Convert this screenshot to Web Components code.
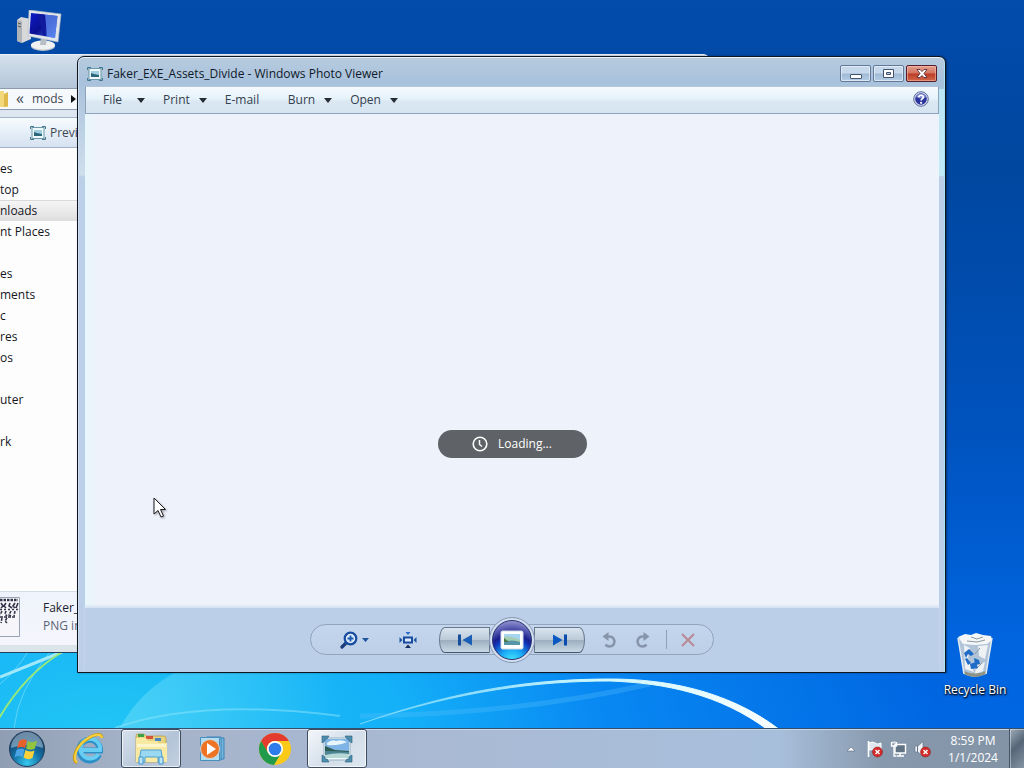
<!DOCTYPE html>
<html lang="en">
<head>
<meta charset="utf-8">
<title>Desktop</title>
<style>
  html, body {
    height: 100%;
    margin: 0;
    overflow: hidden;
  }

  body {
    font-family: 'Open Sans', 'Noto Sans', sans-serif;
    font-size: 12px;
    line-height: 16px;
    color: #1c2430;
    --frame: #bbcfe9;
    --ink: #10161f;
  }
</style>
</head>
<body>
<desk-top>
  <wall-paper slot="wallpaper"></wall-paper>
  <explorer-window></explorer-window>
  <photo-viewer heading="Faker_EXE_Assets_Divide - Windows Photo Viewer"></photo-viewer>
  <desk-icon class="computer" icon="computer" label="Computer" hide-label></desk-icon>
  <desk-icon class="bin" icon="bin" label="Recycle Bin"></desk-icon>
  <mouse-pointer></mouse-pointer>
  <task-bar slot="taskbar"></task-bar>
</desk-top>

<script>
const ICONS = {
  computer: `<svg width="46" height="42" viewBox="0 0 46 42">
    <path d="M1 10 5 7l10 2v20L6 33l-5-2z" fill="#d6d8da"/><path d="M1 10l5 1v22l-5-2z" fill="#aeb3b8"/>
    <path d="M2 13l3 1M2 16l3 1" stroke="#555" stroke-width="1"/>
    <ellipse cx="27" cy="36" rx="12" ry="5" fill="#bfc6cb"/><ellipse cx="27" cy="35" rx="12" ry="4.500" fill="#f0f2f2"/>
    <path d="M25 27h6l-1 8h-6z" fill="#b7bec4"/>
    <path d="M13 0l32 4-3 28-30-6z" fill="#dfe5ea" stroke="#b3bcc5" stroke-width=".6"/>
    <path d="M15 3l26.500 3-2.500 22L13.500 23.500z" fill="url(#scr)"/>
    <path d="M29 4.600l12.500 1.400-2.500 22-8-1.500z" fill="#5f8cf2" opacity=".75"/>
    <path d="M22 3.800l6 .7 2 21.500-3-.5z" fill="#111a9c"/>
    <defs><linearGradient id="scr" x1="0" y1="0" x2="1" y2="1"><stop offset="0" stop-color="#0d19c8"/><stop offset=".5" stop-color="#0a1092"/><stop offset="1" stop-color="#4a76ec"/></linearGradient></defs></svg>`,
  bin: `<svg width="38" height="46" viewBox="0 0 38 46">
    <path d="M2 5l6 36q10 6 22 0l6-36z" fill="#c3cdd6" opacity=".9"/>
    <path d="M2 4l7-3 6 1 5-2 7 2 8 1 1 4-5 4-12 1-12-1z" fill="#f4f6f7"/>
    <path d="M8 12l6 3-2 10 6 14-9-3zM22 13l10-1-3 14-6-3zM20 33l9-4-2 9-8 3z" fill="#eef2f4"/>
    <path d="M15 4l6 2 6-2M11 8l10 1 8-2M24 15l-5 6M26 30l-6 6" stroke="#8b98a3" fill="none"/>
    <path d="M8 20l5-4 5 5-3 2-3-2-2 4zM9 26l2-1 4 5-3 2zM18 25l5 2 1 4-5 1zM14 31l6-2 2 6-7 1z" fill="#1e6cc7"/>
    <path d="M8 38q11 5 22 0v3q-11 6-22 0z" fill="#8d9284"/>
    <path d="M2 5l6 36M36 5l-6 36" stroke="#e6edf2" stroke-width="1.500"/></svg>`,
  photo: `<svg width="16" height="16" viewBox="0 0 16 16">
    <rect x="2" y="2.500" width="12" height="11" fill="#eef8fb" stroke="#6b98a8"/>
    <path d="M4 5h8v6H4z" fill="#9fd0e2"/><path d="M4 7l3 1 5 1v2H4z" fill="#2c6679"/>
    <path d="M.5 4V1.500H4M12 1.500h3.500V4M15.500 12v2.500H12M4 14.500H.5V12" fill="none" stroke="#46798c"/></svg>`,
  help: `<svg width="16" height="16" viewBox="0 0 16 16">
    <circle cx="8" cy="8" r="7.300" fill="#d2d9ec" stroke="#5f6f9c"/><circle cx="8" cy="8" r="5.800" fill="#2a349c"/>
    <path d="M3 6a5.500 5.500 0 0 1 10 0q-3 3-10 0z" fill="#7c8bd0"/>
    <path d="M5.800 6.300C5.800 3.500 10.400 3.600 10.300 6.200 10.200 7.800 8.100 8 8.100 9.600" fill="none" stroke="#fff" stroke-width="1.700"/><circle cx="8.100" cy="11.800" r="1.100" fill="#fff"/></svg>`,
  minimize: `<svg width="12" height="11" viewBox="0 0 12 11"><rect x=".5" y="6.500" width="11" height="4" rx=".5" fill="#fff" stroke="#45526b"/></svg>`,
  maximize: `<svg width="12" height="11" viewBox="0 0 12 11"><path d="M.5 1.500h10v8H.5zM3.500 4.500v2h4v-2z" fill="#fff" stroke="#45526b" fill-rule="evenodd"/></svg>`,
  close: `<svg width="12" height="11" viewBox="0 0 12 11"><path d="M1 1.500h3l2 2 2-2h3L8 5.500l3 4H8l-2-2-2 2H1l3-4z" fill="#fff" stroke="#5b3038" stroke-width=".9"/></svg>`,
  clock: `<svg width="16" height="16" viewBox="0 0 16 16"><circle cx="8" cy="8" r="6.800" fill="none" stroke="#fff" stroke-width="1.600"/><path d="M7.500 4v4.500L10 10.500" fill="none" stroke="#fff" stroke-width="1.500"/></svg>`,
  zoom: `<svg width="30" height="18" viewBox="0 0 30 18">
    <path d="M7 11l-5 5" stroke="#1a3c7c" stroke-width="3.200" stroke-linecap="round"/>
    <circle cx="10.500" cy="7.500" r="5.800" fill="#dceafa" stroke="#174b9d" stroke-width="2.200"/>
    <path d="M7.500 7.500h6M10.500 4.500v6" stroke="#1c59ae" stroke-width="1.800"/><path d="M22 7h7l-3.500 4z" fill="#1d549f"/></svg>`,
  fit: `<svg width="18" height="18" viewBox="0 0 18 18">
    <rect x="5" y="6.500" width="8" height="5" fill="#dceafa" stroke="#174b9d" stroke-width="2"/>
    <path d="M6.500 1h5L9 4z" fill="#2b6ccb"/><path d="M6 17h6L9 13.500z" fill="#142c58"/><path d="M.5 6v6L3.500 9zM17.500 6v6L14.500 9z" fill="#1d549f"/></svg>`,
  previous: `<svg width="16" height="12" viewBox="0 0 16 12"><path d="M1 .5h3v11H1z" fill="#174f9f"/><path d="M15 .5v11L5.500 6z" fill="#1c5fb7"/></svg>`,
  next: `<svg width="16" height="12" viewBox="0 0 16 12"><path d="M12 .5h3v11h-3z" fill="#0a4cb0"/><path d="M1 .5v11L10.500 6z" fill="#0a57c2"/></svg>`,
  slideshow: `<svg width="24" height="20" viewBox="0 0 24 20"><rect x="1" y="1" width="22" height="18" rx="1.500" fill="#fff" stroke="#d5dde8"/>
    <path d="M4 4h16v11H4z" fill="#a6d5ef"/><path d="M4 7q6-2 16 3v5H4z" fill="#a5cdb2"/><path d="M4 12q8-3 16 0v3H4z" fill="#5795a8"/><path d="M4 8l5 4H4z" fill="#4b7a4a"/></svg>`,
  rotateLeft: `<svg width="16" height="18" viewBox="0 0 16 18"><path d="M5 5.500h3.500a5 5 0 1 1-4 8" fill="none" stroke="#8795ab" stroke-width="2.600"/><path d="M7.500 1v9L1.500 5.500z" fill="#8795ab"/></svg>`,
  rotateRight: `<svg width="16" height="18" viewBox="0 0 16 18"><path d="M11 5.500H7.500a5 5 0 1 0 4 8" fill="none" stroke="#8795ab" stroke-width="2.600"/><path d="M8.500 1v9l6-4.500z" fill="#8795ab"/></svg>`,
  remove: `<svg width="16" height="16" viewBox="0 0 16 16"><path d="M2 2l12 12M14 2L2 14" stroke="#b98996" stroke-width="2"/></svg>`,
  folderTab: `<svg width="9" height="18" viewBox="0 0 9 18"><path d="M0 1h4v3l4 1v12H0z" fill="#f3d77b"/><path d="M4 4l4-2v14l-4 1z" fill="#e0b94c"/></svg>`,
  thumb: `<svg width="22" height="42" viewBox="0 0 22 42"><path d="M0 .5h19.500v39H0" fill="#f6f6fa" stroke="#9aa3b5"/>
    <g fill="none" stroke="#35354c" stroke-width="1.600"><path d="M0 3h18" stroke-width="2.500" stroke-dasharray="2.500 1"/><path d="M1 6l2 3-2 2M6 6l-2 3 2 2M10 6l-1 3 3 2M15 6l-2 3 2 2M18 6l-2 5"/><path d="M0 12.500h18" stroke-dasharray="2 2"/><path d="M2 14l-2 4M6 14l-1 3 2 2M11 14l-2 4 2 1M15 14l-1 5M2 21l-1 5M7 21l-2 3 2 2M0 20h16" stroke-dasharray="3 1"/></g></svg>`,
  start: `<svg width="38" height="38" viewBox="0 0 38 38"><defs><radialGradient id="orb" cx=".5" cy=".9" r=".8"><stop offset="0" stop-color="#35c9ee"/><stop offset=".5" stop-color="#1470a5"/><stop offset="1" stop-color="#173e66"/></radialGradient></defs>
    <circle cx="19" cy="19" r="17.500" fill="url(#orb)" stroke="#243c58"/><path d="M3 18a16 16 0 0 1 32 0q-16-6-32 0z" fill="#b3ccdd" opacity=".55"/>
    <path d="M11 11q4-3 8-.5l-2 7.500q-4-2-8 .5z" fill="#e8602c"/><path d="M20 11q4 2.500 9-.5l-2 8q-4 2.500-9 0z" fill="#93c43e"/>
    <path d="M8.500 20q4-2.500 8-.5l-2 7.500q-4-2-8 .5z" fill="#4aa4e4"/><path d="M17.500 20q4 2.500 9 .5l-2 7.500q-4 2.500-9-.5z" fill="#fbd03a"/></svg>`,
  ie: `<svg width="34" height="34" viewBox="0 0 34 34">
    <path d="M27 22.500A10.300 10.300 0 1 1 28 18.500H9" fill="none" stroke="#2d8fc8" stroke-width="6"/>
    <path d="M26.500 22A9.800 9.800 0 1 1 28 18H10" fill="none" stroke="#68cdf2" stroke-width="4"/>
    <path d="M5 31C-1 27 4 14 14 8 22 2 30 0 30 6" fill="none" stroke="#c39a1a" stroke-width="3"/>
    <path d="M5 30.500C0 26 5 14 14 7.500 22 2 29 1 30 6" fill="none" stroke="#fbd23c" stroke-width="2"/></svg>`,
  explorer: `<svg width="34" height="34" viewBox="0 0 34 34">
    <path d="M2 4q0-2 2-2h6l2 2h18q2 0 2 2v24H2z" fill="#e7d27e" stroke="#b89d4c" stroke-width=".8"/>
    <path d="M4 2h6v3H4z" fill="#3fa04c"/><path d="M12 4h7v3h-7z" fill="#d7513c"/><path d="M21 6h6v3h-6z" fill="#4a84c8"/>
    <path d="M2 6h10l2 3h9l1 2h9v19H2z" fill="#f8eaa2"/><path d="M3 12h29v3H3z" fill="#fdf6cc"/>
    <path d="M7 18h20l2 12h-5v-5H11v5H5z" fill="#9bd9f2" stroke="#4f9fd0"/><path d="M5 25h4v7H5zM25 25h4v7h-4z" fill="#b9e5f8" stroke="#4496cc"/></svg>`,
  media: `<svg width="28" height="28" viewBox="0 0 28 28"><path d="M12 3h13v21H12z" fill="#75b5dc" stroke="#3d83b8"/><path d="M8 2h14v23H8z" fill="#8bc6e8" stroke="#3d83b8"/>
    <path d="M1.500 2.500h19v23h-19z" fill="#b3def2" stroke="#498fbe"/><circle cx="11" cy="14" r="9.500" fill="#ee7425" stroke="#d1d5d8"/><path d="M8 8v12l9-6z" fill="#fff"/></svg>`,
  chrome: `<svg width="34" height="34" viewBox="0 0 34 34"><circle cx="17" cy="17" r="16" fill="#fbc918"/>
    <path d="M3.100 9A16 16 0 0 1 30.900 9H17a8 8 0 0 0-7 12z" fill="#e33b2e"/><path d="M3.100 9A16 16 0 0 0 16 33l7.500-12.500a8 8 0 0 1-13.500 0z" fill="#219a4c"/>
    <circle cx="17" cy="17" r="8" fill="#fff"/><circle cx="17" cy="17" r="6.300" fill="#2c7ceb"/></svg>`,
  viewer: `<svg width="32" height="28" viewBox="0 0 32 28"><path d="M3 3h26v22H3z" fill="#f2fafd" stroke="#93b2c2"/><path d="M4 4h24v19H4z" fill="#7fb4e6"/>
    <path d="M6 8q5-4 9-2 5-2 11 1-9 4-20 3z" fill="#e8f5fb"/><path d="M4 11l10 4 14 1v3H4z" fill="#2e5c52"/><path d="M4 16q12 0 24 1v4H4z" fill="#4c8594"/><path d="M4 20q12-3 24-1v4H4z" fill="#b7d9d6"/>
    <path d="M1 8V1h7l-2 3H4v2zM31 8V1h-7l2 3h2v2zM1 20v7h7l-2-3H4v-2zM31 20v7h-7l2-3h2v-2z" fill="#4d8fb0" stroke="#2c607c" stroke-width=".6"/></svg>`,
  chevron: `<svg width="10" height="6" viewBox="0 0 10 6"><path d="M1 5l4-4 4 4z" fill="#fff" stroke="#5c6c80" stroke-width=".6"/></svg>`,
  flag: `<svg width="18" height="18" viewBox="0 0 18 18"><path d="M2.500 1v16" stroke="#fff" stroke-width="1.600"/><path d="M3 3q4-2 6 0t6 0v7q-4 1-6 0t-6 0z" fill="#dfe6ee" stroke="#fff"/>
    <circle cx="11.500" cy="12" r="5" fill="#d32a27" stroke="#8d1f22" stroke-width=".5"/><path d="M9.500 10l4 4M13.500 10l-4 4" stroke="#fff" stroke-width="1.500"/></svg>`,
  network: `<svg width="18" height="18" viewBox="0 0 18 18"><path d="M5 4.500h10.500v8.500H5z" fill="#5f7385" stroke="#fff" stroke-width="1.400"/><path d="M10 13v3M6.500 16h7.500" stroke="#fff" stroke-width="1.500"/>
    <path d="M1.500 2v4h5V2M4 6v10h2M3 1.500v2M5 1.500v2" fill="none" stroke="#fff" stroke-width="1.300"/></svg>`,
  volume: `<svg width="18" height="18" viewBox="0 0 18 18"><path d="M1 6h3l5-4.500v15L4 12H1z" fill="#eef2f6" stroke="#5c6c80" stroke-width=".6"/><path d="M3.500 6v6" stroke="#66768a"/>
    <circle cx="11.500" cy="12" r="5" fill="#d32a27" stroke="#8d1f22" stroke-width=".5"/><path d="M9.500 10l4 4M13.500 10l-4 4" stroke="#fff" stroke-width="1.500"/></svg>`,
  pointer: `<svg width="14" height="22" viewBox="0 0 14 22"><path d="M1 1v16l4-3.500 3 6.500 2.500-1-3-6.500h5z" fill="#fff" stroke="#1b1b22"/></svg>`
};

// Shared base: every element renders one template string into an open root.
class ShellElement extends HTMLElement {
  constructor() {
    super();
    this.attachShadow({ mode: 'open' });
  }

  connectedCallback() {
    this.shadowRoot.innerHTML = this.render();
  }
}

class UiIcon extends ShellElement {
  render() {
    return `
      <style>
        :host { display: inline-flex; flex: none; }
        svg { display: block; }
      </style>
      ${ICONS[this.getAttribute('name')] || ''}
    `;
  }
}

class DeskTop extends ShellElement {
  render() {
    return `
      <style>
        :host {
          display: grid;
          grid-template-rows: 1fr 40px;
          height: 100vh;
          overflow: hidden;
          position: relative;
        }

        main { position: relative; min-height: 0; }

        ::slotted(explorer-window) { position: absolute; inset: 54px 314px 75px 0; }
        ::slotted(photo-viewer) { position: absolute; inset: 56px 78px 55px 77px; }
        ::slotted(.computer) { position: absolute; left: 16px; top: 10px; }
        ::slotted(.bin) { position: absolute; right: 9px; bottom: 30px; width: 80px; }
        ::slotted(mouse-pointer) { position: absolute; left: 153px; top: 497px; }
      </style>
      <slot name="wallpaper"></slot>
      <main><slot></slot></main>
      <slot name="taskbar"></slot>
    `;
  }
}

class WallPaper extends ShellElement {
  render() {
    return `
      <style>
        :host {
          position: absolute;
          inset: 0;
          background:
            radial-gradient(ellipse 840px 440px at 10% 96%, #22c6f4 0%, #14b0f8 36%, rgba(10, 144, 247, 0.8) 60%, rgba(0, 110, 235, 0) 100%),
            linear-gradient(180deg, #034bac 0%, #00479f 22%, #0052bd 55%, #0064de 82%, #0067e4 100%);
        }

        svg { width: 100%; height: 100%; display: block; }
      </style>
      <svg viewBox="0 0 1024 768" preserveAspectRatio="none" fill="none">
        <defs>
          <linearGradient id="arc" gradientUnits="userSpaceOnUse" x1="360" x2="800" y1="0" y2="0">
            <stop offset="0" stop-color="#9fe8fc" stop-opacity=".4"/><stop offset=".5" stop-color="#c9f6fd"/><stop offset="1" stop-color="#fff"/>
          </linearGradient>
          <linearGradient id="glow" x1="0" y1="0" x2="1" y2="0">
            <stop offset="0" stop-color="#7be2fa" stop-opacity=".45"/><stop offset="1" stop-color="#7be2fa" stop-opacity="0"/>
          </linearGradient>
        </defs>
        <path d="M120 728Q140 690 180 670H340V728z" fill="url(#glow)"/>
        <path d="M115 728Q200 698 340 716" stroke="#8ce5fb" stroke-width="2" opacity=".5"/>
        <path d="M360 716Q520 714 650 684" stroke="#59bffb" stroke-width="5" opacity=".3"/>
        <path d="M0 677Q30 665 62 652" stroke="#c3f4fd" stroke-width="3" opacity=".8"/>
        <path d="M0 684Q15 672 28 652M14 728Q18 690 50 652" stroke="#9aeafa" opacity=".5"/>
        <path d="M-2 720Q24 675 62 652" stroke="#9ae878" stroke-width="2"/>
        <path d="M360 724C460 688 540 679 610 679 660 679 725 688 780 730L768 730C720 694 665 683 610 681 540 681 460 690 360 724z" fill="url(#arc)" stroke="url(#arc)"/>
      </svg>
    `;
  }
}

class DeskIcon extends ShellElement {
  render() {
    const label = this.getAttribute('label');
    return `
      <style>
        :host { display: block; }

        button {
          display: flex;
          flex-direction: column;
          align-items: center;
          gap: 3px;
          width: 100%;
          padding: 0;
          border: 0;
          background: none;
          font: inherit;
          color: #fff;
          text-shadow: 0 1px 2px #000, 1px 1px 2px #000;
          white-space: nowrap;
        }
      </style>
      <button type="button" aria-label="${label}">
        <ui-icon name="${this.getAttribute('icon')}"></ui-icon>
        ${this.hasAttribute('hide-label') ? '' : `<span>${label}</span>`}
      </button>
    `;
  }
}

class NavItem extends ShellElement {
  render() {
    return `
      <style>
        :host { display: block; height: 21px; }

        a {
          display: block;
          line-height: 21px;
          color: #15161c;
          text-decoration: none;
          white-space: nowrap;
        }

        :host([selected]) {
          background: linear-gradient(#f7f7f7, #dedede);
          box-shadow: inset 0 1px #d9d9d9;
        }
      </style>
      <a href="#"><slot></slot></a>
    `;
  }
}

class ExplorerWindow extends ShellElement {
  render() {
    return `
      <style>
        :host {
          display: flex;
          flex-direction: column;
          box-sizing: border-box;
          border: 1px solid #24405c;
          border-top-color: #e8f1f8;
          border-left: 0;
          border-radius: 0 7px 0 0;
          background: #dde6f1;
          overflow: hidden;
        }

        .caption { height: 33px; background: linear-gradient(#d5e1ec, #b3c5d9); }

        .address {
          display: flex;
          align-items: center;
          gap: 7px;
          height: 20px;
          border: 1px solid #8c9bb0;
          border-left: 0;
          background: #f6f9fc;
        }

        .address button, .tools button {
          display: flex;
          align-items: center;
          gap: 4px;
          padding: 0;
          border: 0;
          background: none;
          font: inherit;
          color: #3f4652;
        }

        .address .crumb { gap: 8px; }
        .address b { font-size: 16px; font-weight: normal; line-height: 16px; padding-bottom: 2px; }

        .arrow {
          border: 4px solid transparent;
          border-left: 5px solid #111;
          border-right: 0;
        }

        .tools {
          display: flex;
          align-items: center;
          height: 29px;
          margin-top: 7px;
          padding-left: 30px;
          border: 1px solid #a4b3c8;
          border-left: 0;
          background: linear-gradient(#f7fbfe, #e6eff8 50%, #d6e1f0);
        }

        nav { flex: 1; min-height: 0; padding-top: 10px; background: #fdfdfe; }

        footer {
          display: flex;
          align-items: flex-start;
          gap: 21px;
          height: 48px;
          padding-top: 5px;
          border-top: 1px solid #d4dce8;
          background: linear-gradient(#eff3fb, #f5f6fc);
        }

        footer div { padding-top: 2px; line-height: 18px; white-space: nowrap; }
        footer span { display: block; color: #5a6478; }
        .edge { height: 7px; background: #dbe4e8; }
      </style>
      <div class="caption"></div>
      <div class="address">
        <ui-icon name="folderTab"></ui-icon>
        <button type="button" class="crumb"><b>«</b><span>mods</span><i class="arrow"></i></button>
      </div>
      <div class="tools">
        <button type="button"><ui-icon name="photo"></ui-icon>Previ</button>
      </div>
      <nav>
        <nav-item>es</nav-item>
        <nav-item>top</nav-item>
        <nav-item selected>nloads</nav-item>
        <nav-item>nt Places</nav-item>
        <nav-item></nav-item>
        <nav-item>es</nav-item>
        <nav-item>ments</nav-item>
        <nav-item>c</nav-item>
        <nav-item>res</nav-item>
        <nav-item>os</nav-item>
        <nav-item></nav-item>
        <nav-item>uter</nav-item>
        <nav-item></nav-item>
        <nav-item>rk</nav-item>
      </nav>
      <footer>
        <ui-icon name="thumb"></ui-icon>
        <div>Faker_<span>PNG im</span></div>
      </footer>
      <div class="edge"></div>
    `;
  }
}

class MenuButton extends ShellElement {
  render() {
    return `
      <style>
        :host { display: block; }

        button {
          display: flex;
          align-items: center;
          justify-content: space-between;
          gap: 9px;
          min-width: 42px;
          padding: 0;
          border: 0;
          background: none;
          font: inherit;
          color: #33404f;
        }

        :host([plain]) button { min-width: 45px; }

        i {
          border: 4px solid transparent;
          border-top: 5px solid #252c36;
          border-bottom: 0;
        }
      </style>
      <button type="button"><slot></slot>${this.hasAttribute('plain') ? '' : '<i></i>'}</button>
    `;
  }
}

class LoadingPill extends ShellElement {
  render() {
    return `
      <style>
        :host {
          display: flex;
          align-items: center;
          justify-content: center;
          gap: 10px;
          width: 149px;
          height: 28px;
          border-radius: 14px;
          background: #5f6266;
          color: #fff;
        }
      </style>
      <ui-icon name="clock"></ui-icon>
      <slot></slot>
    `;
  }
}

class PlayControls extends ShellElement {
  render() {
    return `
      <style>
        :host {
          display: grid;
          grid-template-columns: 1fr auto 1fr;
          align-items: center;
          box-sizing: border-box;
          width: 404px;
          height: 31px;
          border: 1px solid #93a5bd;
          border-radius: 16px;
          background: linear-gradient(#c4d6ed, #bccfe7);
        }

        .group { display: flex; align-items: center; }
        .left { justify-content: flex-end; gap: 29px; padding-right: 22px; }
        .right { gap: 10px; padding-left: 12px; }

        button {
          display: flex;
          align-items: center;
          justify-content: center;
          padding: 0;
          border: 0;
          background: none;
        }

        .right button { width: 24px; }

        .step {
          width: 51px;
          height: 26px;
          border: 1px solid #66788c;
          border-bottom-color: #44566c;
          background: linear-gradient(#d9e5ef, #bccad8 48%, #9dafc0 52%, #c8d8e6);
        }

        .back { border-radius: 6px 0 0 6px / 13px 0 0 13px; }
        .forward { border-radius: 0 6px 6px 0 / 0 13px 13px 0; }

        .play {
          position: relative;
          z-index: 1;
          width: 46px;
          height: 46px;
          margin: -8px -1px;
          border: 1px solid #8797b4;
          border-radius: 50%;
          background: #d3dff0;
        }

        .play::before {
          content: '';
          position: absolute;
          inset: 2px;
          border: 1px solid #26346f;
          border-radius: 50%;
          background: radial-gradient(circle at 50% 108%, #4df0ff 0, #18a9f5 28%, #1233b8 52%, #1a1f8e 60%, #a5a6dc 96%);
        }

        .play ui-icon { position: relative; }

        hr { width: 1px; height: 19px; margin: 0 -1px 0 1px; border: 0; background: #8fa0b9; }
      </style>
      <div class="group left">
        <button type="button" aria-label="Zoom"><ui-icon name="zoom"></ui-icon></button>
        <button type="button" aria-label="Fit to window"><ui-icon name="fit"></ui-icon></button>
      </div>
      <div class="group">
        <button type="button" class="step back" aria-label="Previous"><ui-icon name="previous"></ui-icon></button>
        <button type="button" class="play" aria-label="Slide show"><ui-icon name="slideshow"></ui-icon></button>
        <button type="button" class="step forward" aria-label="Next"><ui-icon name="next"></ui-icon></button>
      </div>
      <div class="group right">
        <button type="button" aria-label="Rotate left"><ui-icon name="rotateLeft"></ui-icon></button>
        <button type="button" aria-label="Rotate right"><ui-icon name="rotateRight"></ui-icon></button>
        <hr>
        <button type="button" aria-label="Delete"><ui-icon name="remove"></ui-icon></button>
      </div>
    `;
  }
}

class PhotoViewer extends ShellElement {
  render() {
    return `
      <style>
        :host {
          display: flex;
          flex-direction: column;
          box-sizing: border-box;
          padding: 0 6px 0 7px;
          border: 1px solid var(--ink);
          border-radius: 7px 7px 0 0;
          background:
            linear-gradient(90deg, rgba(215, 235, 247, 0) 50%, rgba(190, 238, 250, 0.8)) 0 32px / 100% 87px no-repeat,
            linear-gradient(#b7cbde, #a9c2dc 25px, #cfdeec 118px, var(--frame) 120px);
          box-shadow: inset 0 1px #e9f3fb, inset -1px 0 #a8e4f6, inset 1px 0 #d0def0, 1px 0 2px rgba(0, 0, 0, 0.4);
        }

        header {
          display: flex;
          align-items: center;
          gap: 4px;
          height: 29px;
          padding-left: 2px;
          color: #0f1a2a;
        }

        h1 {
          flex: 1;
          margin: 0;
          padding-top: 4px;
          font-size: 12px;
          font-weight: normal;
          white-space: nowrap;
        }

        header ui-icon { padding-top: 4px; }
        header button ui-icon { padding: 0; }
        .buttons { display: flex; gap: 2px; padding: 4px 2px 0 0; }

        .buttons button {
          display: flex;
          align-items: center;
          justify-content: center;
          box-sizing: border-box;
          width: 31px;
          height: 17px;
          padding: 0;
          border: 1px solid #63799a;
          border-radius: 2px;
          background: linear-gradient(#c6d9ec 48%, #9fb9d5 52%, #b6cee6);
          box-shadow: inset 0 0 0 1px rgba(255, 255, 255, 0.5);
        }

        .buttons .close {
          border-color: #571d2b;
          background: linear-gradient(#e4a090, #d3735f 48%, #bc3c26 52%, #d0674a);
          box-shadow: inset 0 0 0 1px rgba(255, 200, 185, 0.5);
        }

        .menu {
          display: flex;
          align-items: center;
          gap: 18px;
          height: 26px;
          padding: 0 9px 0 17px;
          border: 1px solid #8fa2bb;
          border-top-color: #b5c5d8;
          background: linear-gradient(#f4fafe, #e6f2fa 45%, #dbe8f2 55%, #d6e4f1);
        }

        .menu button {
          display: flex;
          margin-left: auto;
          padding: 0 0 3px;
          border: 0;
          background: none;
        }

        .stage {
          flex: 1;
          min-height: 0;
          margin: 0;
          display: flex;
          align-items: flex-end;
          justify-content: center;
          padding-bottom: 150px;
          background: linear-gradient(90deg, #e7f7fb, #eef2fb 12px);
        }

        footer {
          display: flex;
          align-items: center;
          justify-content: center;
          height: 62px;
          padding-bottom: 2px;
          box-shadow: 0 -2px 2px #d5e1f2;
        }
      </style>
      <header>
        <ui-icon name="photo"></ui-icon>
        <h1>${this.getAttribute('heading')}</h1>
        <div class="buttons">
          <button type="button" aria-label="Minimize"><ui-icon name="minimize"></ui-icon></button>
          <button type="button" aria-label="Maximize"><ui-icon name="maximize"></ui-icon></button>
          <button type="button" class="close" aria-label="Close"><ui-icon name="close"></ui-icon></button>
        </div>
      </header>
      <div class="menu">
        <menu-button>File</menu-button>
        <menu-button>Print</menu-button>
        <menu-button plain>E-mail</menu-button>
        <menu-button>Burn</menu-button>
        <menu-button>Open</menu-button>
        <button type="button" aria-label="Help"><ui-icon name="help"></ui-icon></button>
      </div>
      <div class="stage"><loading-pill>Loading...</loading-pill></div>
      <footer><play-controls></play-controls></footer>
    `;
  }
}

class MousePointer extends ShellElement {
  render() {
    return `
      <style>
        :host { display: block; pointer-events: none; filter: drop-shadow(1px 1px 1px rgba(0, 0, 0, 0.35)); }
      </style>
      <ui-icon name="pointer"></ui-icon>
    `;
  }
}

class TaskButton extends ShellElement {
  render() {
    return `
      <style>
        :host { display: flex; width: 60px; }

        button {
          display: flex;
          align-items: center;
          justify-content: center;
          flex: 1;
          padding: 0;
          border: 1px solid transparent;
          border-radius: 3px;
          background: none;
        }

        :host([open]) button {
          border-color: #3f4d60;
          background: linear-gradient(135deg, #d6e0eb, #b4c4d8 60%, #c3d0e0);
          box-shadow: inset 0 0 0 1px rgba(255, 255, 255, 0.65);
        }

        :host([active]) button { background: linear-gradient(135deg, #f2f6fa, #d3deea 55%, #dce7f0); }
      </style>
      <button type="button" aria-label="${this.getAttribute('label')}"><ui-icon name="${this.getAttribute('icon')}"></ui-icon></button>
    `;
  }
}

class TaskBar extends ShellElement {
  render() {
    return `
      <style>
        :host {
          display: flex;
          box-sizing: border-box;
          position: relative;
          border-top: 1px solid #33516f;
          background: linear-gradient(90deg, #8f9eb3, #a5b3c9 13%, #a9bad4 45%, #a8bfdb 76%, #8799ad 86%, #8393a6);
          box-shadow: inset 0 1px #c8d8e8;
        }

        .start {
          display: flex;
          align-items: center;
          width: 59px;
          padding: 0 0 0 8px;
          border: 0;
          background: none;
        }

        .tasks { display: flex; flex: 1; gap: 2px; }

        .tray { display: flex; align-items: center; gap: 6px; }

        .tray button {
          display: flex;
          align-items: center;
          justify-content: center;
          min-width: 18px;
          padding: 0;
          border: 0;
          background: none;
          font: inherit;
          line-height: 17px;
          color: #fff;
        }

        .tray .clock { display: block; width: 58px; margin: 0 1px 0 6px; text-align: center; }

        .tray .show {
          align-self: stretch;
          min-width: 15px;
          border: 1px solid #46566a;
          border-width: 0 0 0 1px;
          background: linear-gradient(135deg, #a0adba, #566678 45%, #8593a3);
          box-shadow: inset 1px 1px rgba(255, 255, 255, 0.4);
        }
      </style>
      <button type="button" class="start" aria-label="Start"><ui-icon name="start"></ui-icon></button>
      <div class="tasks">
        <task-button icon="ie" label="Internet Explorer"></task-button>
        <task-button icon="explorer" label="Windows Explorer" open></task-button>
        <task-button icon="media" label="Media Player"></task-button>
        <task-button icon="chrome" label="Chrome"></task-button>
        <task-button icon="viewer" label="Photo Viewer" open active></task-button>
      </div>
      <div class="tray">
        <button type="button" aria-label="Show hidden icons"><ui-icon name="chevron"></ui-icon></button>
        <button type="button" aria-label="Action Center"><ui-icon name="flag"></ui-icon></button>
        <button type="button" aria-label="Network"><ui-icon name="network"></ui-icon></button>
        <button type="button" aria-label="Volume"><ui-icon name="volume"></ui-icon></button>
        <button type="button" class="clock">8:59 PM<br>1/1/2024</button>
        <button type="button" class="show" aria-label="Show desktop"></button>
      </div>
    `;
  }
}

customElements.define('ui-icon', UiIcon);
customElements.define('wall-paper', WallPaper);
customElements.define('desk-icon', DeskIcon);
customElements.define('nav-item', NavItem);
customElements.define('explorer-window', ExplorerWindow);
customElements.define('menu-button', MenuButton);
customElements.define('loading-pill', LoadingPill);
customElements.define('play-controls', PlayControls);
customElements.define('photo-viewer', PhotoViewer);
customElements.define('mouse-pointer', MousePointer);
customElements.define('task-button', TaskButton);
customElements.define('task-bar', TaskBar);
customElements.define('desk-top', DeskTop);
</script>
</body>
</html>
